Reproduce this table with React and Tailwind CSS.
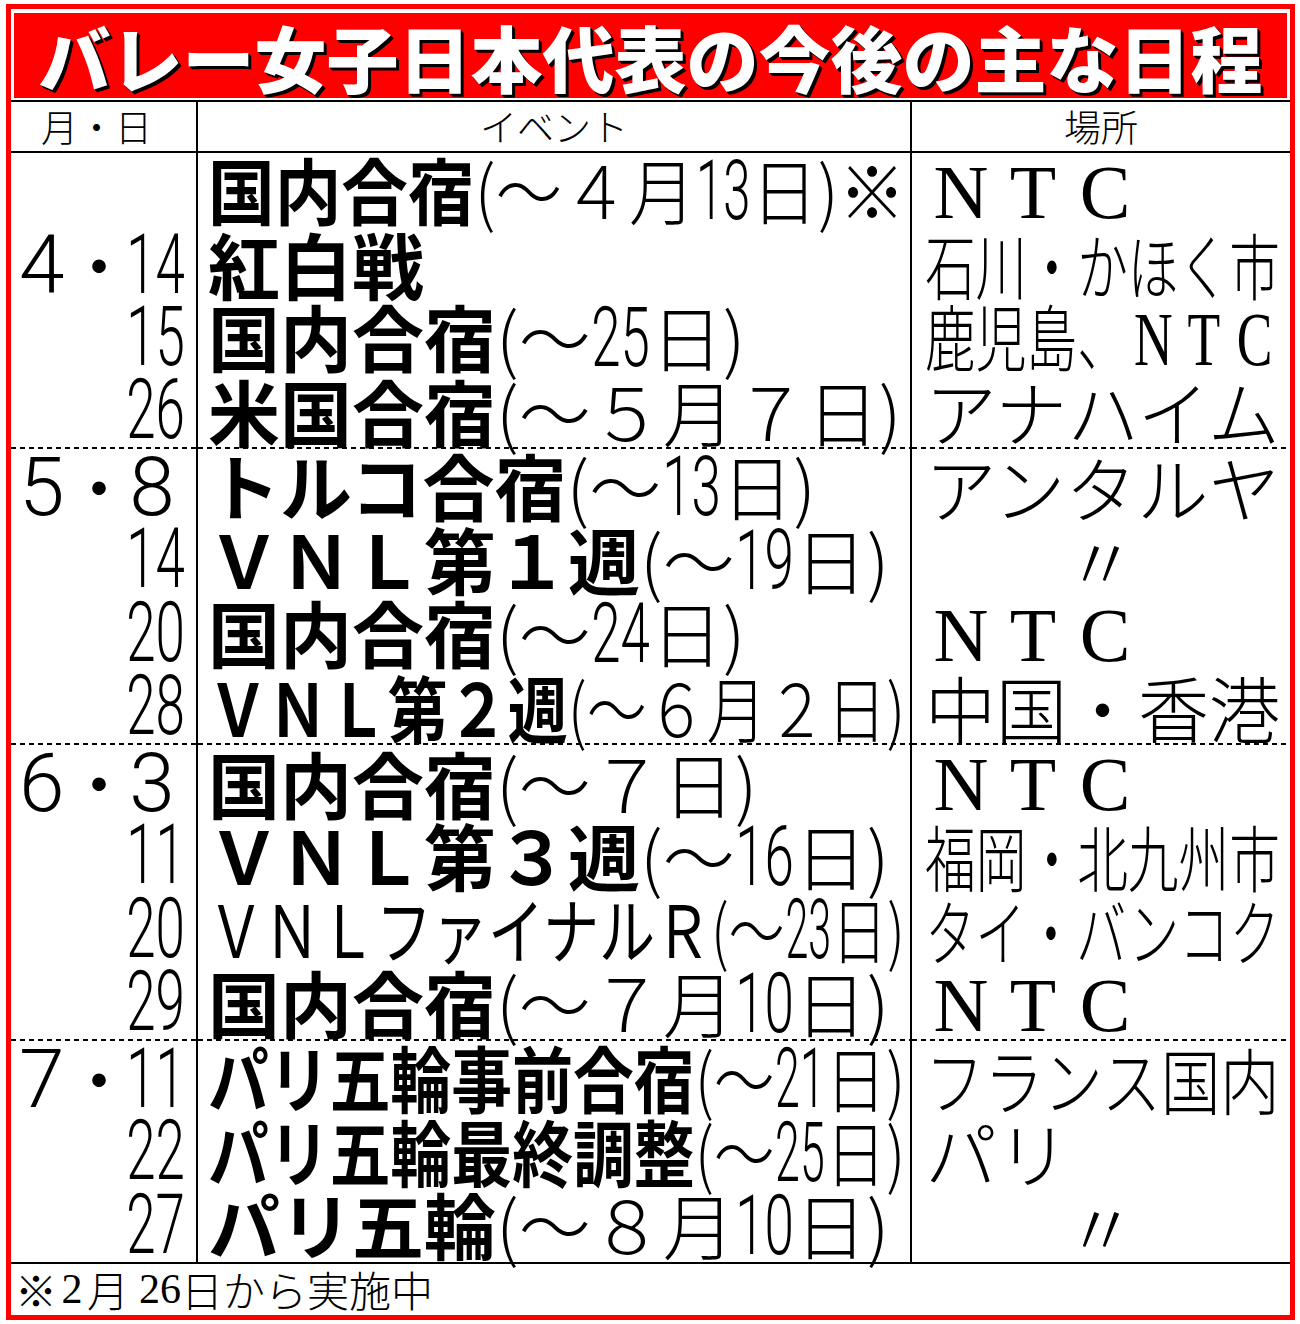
import React, { useLayoutEffect, useRef, useState } from 'react';

const groups = [
  [
    { date: null, ev: '**国内合宿**(～４月{13}日)※', pl: 'ＮＴＣ' },
    { date: { m: '4', d: '14' }, ev: '**紅白戦**', pl: '石川・かほく市' },
    { date: { d: '15' }, ev: '**国内合宿**(～{25}日)', pl: '鹿児島、ＮＴＣ' },
    { date: { d: '26' }, ev: '**米国合宿**(～５月７日)', pl: 'アナハイム' },
  ],
  [
    { date: { m: '5', d: '8' }, ev: '**トルコ合宿**(～{13}日)', pl: 'アンタルヤ' },
    { date: { d: '14' }, ev: '**ＶＮＬ第１週**(～{19}日)', pl: '〃' },
    { date: { d: '20' }, ev: '**国内合宿**(～{24}日)', pl: 'ＮＴＣ' },
    { date: { d: '28' }, ev: '**ＶＮＬ第２週**(～６月２日)', pl: '中国・香港' },
  ],
  [
    { date: { m: '6', d: '3' }, ev: '**国内合宿**(～７日)', pl: 'ＮＴＣ' },
    { date: { d: '11' }, ev: '**ＶＮＬ第３週**(～{16}日)', pl: '福岡・北九州市' },
    { date: { d: '20' }, ev: '^ＶＮＬファイナルＲ^(～{23}日)', pl: 'タイ・バンコク' },
    { date: { d: '29' }, ev: '**国内合宿**(～７月{10}日)', pl: 'ＮＴＣ' },
  ],
  [
    { date: { m: '7', d: '11' }, ev: '**パリ五輪事前合宿**(～{21}日)', pl: 'フランス国内' },
    { date: { d: '22' }, ev: '**パリ五輪最終調整**(～{25}日)', pl: 'パリ' },
    { date: { d: '27' }, ev: '**パリ五輪**(～８月{10}日)', pl: '〃' },
  ],
];

// squeezes a line horizontally when it is wider than its column
const Fit = ({ max, children }) => {
  const ref = useRef(null);
  const [scale, setScale] = useState(1);

  useLayoutEffect(() => {
    const measure = () => {
      const w = ref.current ? ref.current.offsetWidth : 0;
      setScale(w > max ? max / w : 1);
    };
    measure();
    if (document.fonts && document.fonts.ready) document.fonts.ready.then(measure);
  }, [max]);

  return (
    <div ref={ref} className="inline-block whitespace-nowrap origin-left" style={{ transform: `scaleX(${scale})` }}>
      {children}
    </div>
  );
};

// tall narrow two-digit numbers
const Cond = ({ children }) => (
  <span className="inline-flex w-[60px] justify-center">
    <span className="inline-block scale-x-[0.63] font-['Roboto',sans-serif] font-light text-[84px] leading-[72px]">
      {children}
    </span>
  </span>
);

const NTC = () => (
  <span className="inline-flex font-['Liberation_Serif',serif] font-normal text-[76px] leading-[72px]">
    <span className="w-[72px] text-center">N</span>
    <span className="w-[72px] text-center">T</span>
    <span className="w-[72px] text-center">C</span>
  </span>
);

const Dash = () => (
  <div className="h-[2px] bg-[image:repeating-linear-gradient(90deg,#000_0_5px,transparent_5px_9px)]" />
);

const renderEvent = (str) =>
  str
    .split(/(\*\*[^*]+\*\*|\^[^^]+\^|\{\d+\})/)
    .filter(Boolean)
    .map((p, i) => {
      if (p.startsWith('**')) return <span key={i} className="font-bold">{p.slice(2, -2)}</span>;
      if (p.startsWith('^')) return <span key={i} className="font-normal">{p.slice(1, -1)}</span>;
      if (p.startsWith('{')) return <Cond key={i}>{p.slice(1, -1)}</Cond>;
      return <span key={i} className="font-light">{p}</span>;
    });

const renderPlace = (str) =>
  str
    .split(/(ＮＴＣ)/)
    .filter(Boolean)
    .map((p, i) => (p === 'ＮＴＣ' ? <NTC key={i} /> : <span key={i}>{p}</span>));

const DateCell = ({ date }) => (
  <div className="h-[73.5px] flex items-center">
    {date && (
      <div className="flex items-baseline w-full">
        <span className="w-[68px] pl-[8px] font-['Roboto',sans-serif] font-light text-[82px] leading-[72px]">
          {date.m || ''}
        </span>
        <span className="w-[40px] inline-flex justify-center font-light text-[72px] leading-[72px]">
          {date.m ? '・' : ''}
        </span>
        <span className="ml-auto pr-[10px] flex items-baseline">
          {date.d.length === 2 ? (
            <Cond>{date.d}</Cond>
          ) : (
            <span className="w-[56px] mr-[6px] text-center font-['Roboto',sans-serif] font-light text-[82px] leading-[72px]">
              {date.d}
            </span>
          )}
        </span>
      </div>
    )}
  </div>
);

export default function App() {
  return (
    <div className="w-[1300px] h-[1324px] overflow-hidden bg-white pt-[4px] pl-[6px] text-black font-['Noto_Sans_CJK_JP',sans-serif]">
      <div className="w-[1289px] h-[1316px] overflow-hidden border-[5px] border-[#ff0000] flex flex-col">
        {/* title */}
        <div className="px-[3px] pt-[4px] pb-[2px]">
          <div className="h-[85px] bg-[#ff0000] flex items-center justify-center">
            <span className="text-white font-black text-[72px] leading-none whitespace-nowrap [text-shadow:1px_1px_0_#000,2px_2px_0_#000,3px_3px_0_#000]">
              バレー女子日本代表の今後の主な日程
            </span>
          </div>
        </div>

        <div className="h-[2px] bg-black" />

        {/* column heads */}
        <div className="h-[49px] flex font-light text-[37px] leading-none">
          <div className="w-[187px] border-r-2 border-black flex items-center justify-center pr-[14px]">月・日</div>
          <div className="w-[714px] border-r-2 border-black flex items-center justify-center">イベント</div>
          <div className="flex-1 flex items-center justify-center">場所</div>
        </div>

        <div className="h-[2px] bg-black" />

        {/* body */}
        <div className="flex">
          <div className="w-[187px] border-r-2 border-black flex flex-col">
            {groups.map((g, gi) => (
              <React.Fragment key={gi}>
                {g.map((r, ri) => (
                  <DateCell key={ri} date={r.date} />
                ))}
                {gi < groups.length - 1 && <Dash />}
              </React.Fragment>
            ))}
          </div>

          <div className="w-[714px] border-r-2 border-black flex flex-col">
            {groups.map((g, gi) => (
              <React.Fragment key={gi}>
                {g.map((r, ri) => (
                  <div key={ri} className="h-[73.5px] flex items-center pl-[10px] text-[72px] leading-[72px]">
                    <Fit max={697}>{renderEvent(r.ev)}</Fit>
                  </div>
                ))}
                {gi < groups.length - 1 && <Dash />}
              </React.Fragment>
            ))}
          </div>

          <div className="flex-1 min-w-0 flex flex-col">
            {groups.map((g, gi) => (
              <React.Fragment key={gi}>
                {g.map((r, ri) =>
                  r.pl === '〃' ? (
                    <div key={ri} className="h-[73.5px] flex items-center justify-center font-light text-[72px] leading-[72px]">
                      〃
                    </div>
                  ) : (
                    <div key={ri} className="h-[73.5px] flex items-center pl-[13px] font-light text-[72px] leading-[72px]">
                      <Fit max={355}>{renderPlace(r.pl)}</Fit>
                    </div>
                  )
                )}
                {gi < groups.length - 1 && <Dash />}
              </React.Fragment>
            ))}
          </div>
        </div>

        <div className="h-[2px] bg-black" />

        {/* footnote */}
        <div className="flex-1 flex items-center pl-[4px] font-light text-[42px] leading-none whitespace-nowrap">
          <span className="w-[42px] text-center">※</span>
          <span className="w-[30px] text-center font-['Liberation_Serif',serif]">2</span>
          <span>月</span>
          <span className="ml-[10px] font-['Liberation_Serif',serif]">26</span>
          <span>日から実施中</span>
        </div>
      </div>
    </div>
  );
}
